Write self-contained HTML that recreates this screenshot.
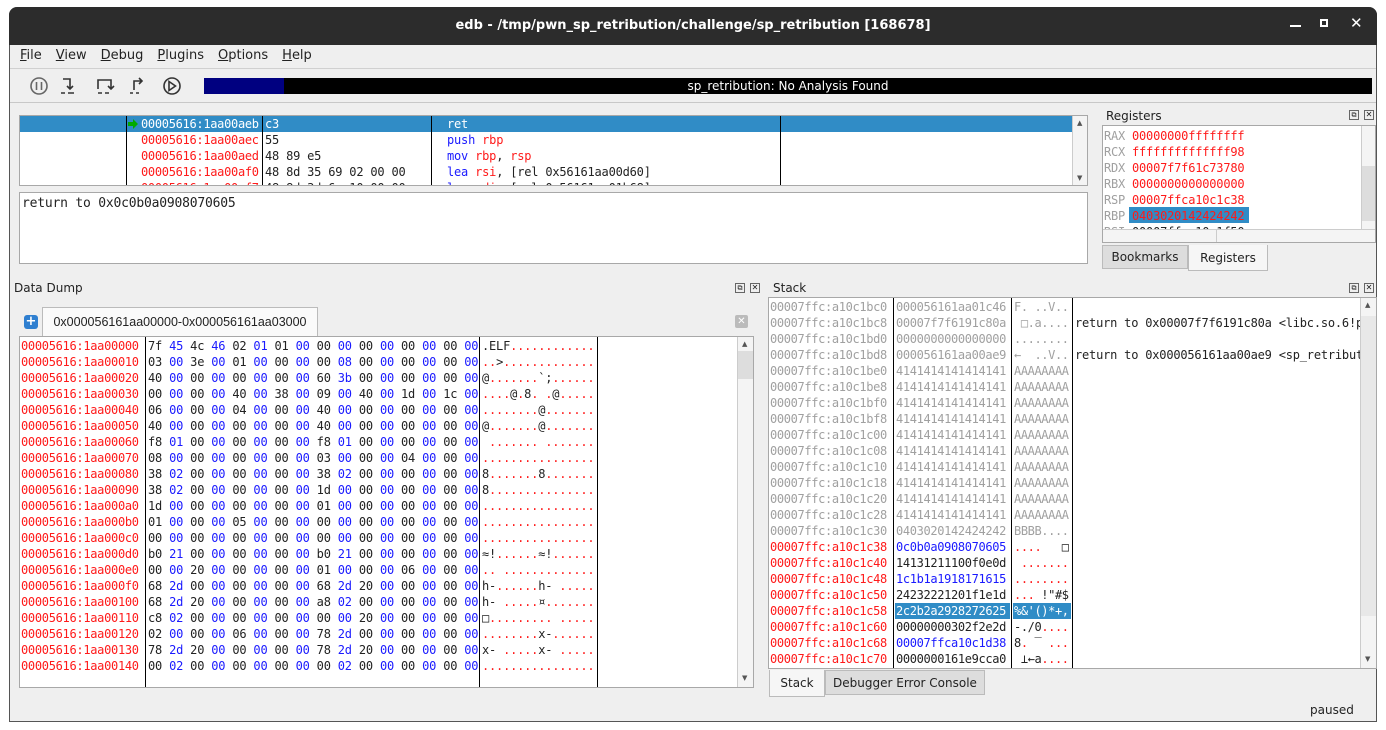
<!DOCTYPE html>
<html><head><meta charset="utf-8"><style>
*{margin:0;padding:0;box-sizing:border-box}
body{width:1386px;height:730px;background:#fff;position:relative;overflow:hidden;font-family:"DejaVu Sans","Liberation Sans",sans-serif;font-size:12px;color:#222}
.a{position:absolute}
.win{left:9px;top:7px;width:1368px;height:715px;background:#efefef;border:1px solid #555;border-top:none;border-radius:8px 8px 0 0;overflow:hidden}
.title{left:9px;top:7px;width:1368px;height:38px;background:#2c2c2c;border-radius:8px 8px 0 0;color:#fff;font-weight:bold;font-size:13px;text-align:center;line-height:38px}
.mono{font-family:"DejaVu Sans Mono","Liberation Mono",monospace;font-size:12px;white-space:pre;line-height:16px;letter-spacing:-0.2px}
.box{background:#fff;border:1px solid #a8a8a8}
.r{color:#ff1a1a}.b{color:#1a1aff}.g{color:#a0a0a0}.k{color:#222}
.vl{position:absolute;width:1px;background:#000}
.sb{position:absolute;background:#f4f4f4;border-left:1px solid #ccc}
.tab{position:absolute;border:1px solid #bbb;text-align:center;font-size:12px;white-space:nowrap}
</style></head><body>
<div class="a win"></div>
<div class="a title">edb - /tmp/pwn_sp_retribution/challenge/sp_retribution [168678]</div>
<div class="a" style="left:1290px;top:25px;width:11px;height:2px;background:#fff"></div>
<div class="a" style="left:1320px;top:19px;width:8px;height:8px;border:2px solid #fff"></div>
<div class="a" style="left:1350px;top:14px;color:#fff;font-size:15px;font-weight:bold">✕</div>

<div class="a" style="left:20px;top:48px;font-size:13px">
<span style="margin-right:14px"><u>F</u>ile</span><span style="margin-right:14px"><u>V</u>iew</span><span style="margin-right:14px"><u>D</u>ebug</span><span style="margin-right:14px"><u>P</u>lugins</span><span style="margin-right:14px"><u>O</u>ptions</span><span><u>H</u>elp</span></div>
<div class="a" style="left:10px;top:68px;width:1366px;height:1px;background:#d0d0d0"></div>
<svg class="a" style="left:14px;top:74px" width="180" height="24" fill="none" stroke="#333" stroke-width="1.6">
<circle cx="25" cy="12" r="8" stroke="#666"/><line x1="22.5" y1="8" x2="22.5" y2="16" stroke="#666"/><line x1="27.5" y1="8" x2="27.5" y2="16" stroke="#666"/>
<path d="M49 5h7v10M53 12l3 3 3-3M47 19h4M54 19h6"/>
<path d="M84 15V6h13v9M94 12l3 3 3-3M84 19h4M91 19h4"/>
<path d="M116 19h3M122 19h3M120 16V7h8M125 4l3 3-3 3"/>
<circle cx="158" cy="12" r="8"/><path d="M155 7.5l6.5 4.5-6.5 4.5z"/>
</svg>
<div class="a" style="left:204px;top:78px;width:1168px;height:16px;background:#000;color:#fff;text-align:center;font-size:12px;line-height:16px">sp_retribution: No Analysis Found</div>
<div class="a" style="left:204px;top:78px;width:80px;height:16px;background:#000080"></div>
<div class="a" style="left:10px;top:102px;width:1366px;height:1px;background:#c8c8c8"></div>

<div class="a box" style="left:19px;top:115px;width:1069px;height:71px;overflow:hidden">
<div class="a" style="left:0;top:0;width:1052px;height:16px;background:#308cc6"></div>
<div class="vl" style="left:106px;top:0;height:71px"></div>
<div class="vl" style="left:242px;top:0;height:71px"></div>
<div class="vl" style="left:411px;top:0;height:71px"></div>
<div class="vl" style="left:760px;top:0;height:71px"></div>
<svg class="a" style="left:107px;top:3px" width="12" height="10"><path d="M1 3h5V0l5 5-5 5V7H1z" fill="#0a0"/></svg>
<div class="a mono" style="left:121px;top:0;letter-spacing:-0.3px"><span style="color:#fff">00005616:1aa00aeb</span>
<span class="r">00005616:1aa00aec</span>
<span class="r">00005616:1aa00aed</span>
<span class="r">00005616:1aa00af0</span>
<span class="r">00005616:1aa00af7</span></div>
<div class="a mono" style="left:245px;top:0"><span style="color:#fff">c3</span>
55
48 89 e5
48 8d 35 69 02 00 00
48 8d 3d 6a 10 00 00</div>
<div class="a mono" style="left:427px;top:0"><span style="color:#fff">ret</span>
<span class="b">push</span> <span class="r">rbp</span>
<span class="b">mov</span> <span class="r">rbp</span>, <span class="r">rsp</span>
<span class="b">lea</span> <span class="r">rsi</span>, [rel 0x56161aa00d60]
<span class="b">lea</span> <span class="r">rdi</span>, [rel 0x56161aa01b68]</div>
<div class="sb" style="left:1052px;top:0;width:16px;height:71px"><div style="position:absolute;top:3px;left:4px;font-size:7px;color:#555">▲</div><div style="position:absolute;top:58px;left:4px;font-size:7px;color:#555">▼</div></div>
</div>
<div class="a box" style="left:19px;top:192px;width:1069px;height:72px"><div class="a mono" style="left:2px;top:3px;font-size:13px">return to 0x0c0b0a0908070605</div></div>

<div class="a" style="left:1106px;top:109px;font-size:12px">Registers</div>
<div class="a" style="left:1349px;top:110px;width:10px;height:10px;border:1px solid #666;font-size:7px;line-height:8px;text-align:center">⧉</div>
<div class="a" style="left:1364px;top:110px;width:10px;height:10px;border:1px solid #666;font-size:8px;line-height:8px;text-align:center">✕</div>
<div class="a box" style="left:1102px;top:125px;width:274px;height:118px;overflow:hidden">
<div class="a" style="left:26px;top:81px;width:120px;height:16px;background:#308cc6"></div>
<div class="a mono g" style="left:1px;top:2px">RAX
RCX
RDX
RBX
RSP
RBP
RSI</div>
<div class="a mono r" style="left:29px;top:2px">00000000ffffffff
ffffffffffffff98
00007f7f61c73780
0000000000000000
00007ffca10c1c38
0403020142424242
<span class="k">00007ffca10c1f50</span></div>
<div class="sb" style="left:258px;top:0;width:16px;height:104px"><div style="position:absolute;top:40px;left:0;width:15px;height:55px;background:#ddd"></div></div>
<div class="a" style="left:0;top:103px;width:274px;height:15px;background:#f4f4f4;border-top:1px solid #ccc"><div style="position:absolute;left:113px;top:0;width:1px;height:14px;background:#ccc"></div></div>
</div>
<div class="tab" style="left:1102px;top:245px;width:86px;height:24px;background:#ddd;line-height:22px">Bookmarks</div>
<div class="tab" style="left:1188px;top:245px;width:80px;height:26px;background:#f6f6f6;border-top:none;line-height:26px">Registers</div>

<div class="a" style="left:14px;top:281px">Data Dump</div>
<div class="a" style="left:735px;top:283px;width:10px;height:10px;border:1px solid #666;font-size:7px;line-height:8px;text-align:center">⧉</div>
<div class="a" style="left:750px;top:283px;width:10px;height:10px;border:1px solid #666;font-size:8px;line-height:8px;text-align:center">✕</div>
<div class="a" style="left:24px;top:315px;width:14px;height:14px;background:#2f7fd0;border-radius:3px;color:#fff;font-weight:bold;font-size:13px;line-height:13px;text-align:center">+</div>
<div class="tab" style="left:42px;top:307px;width:276px;height:30px;background:#fafafa;border-bottom:none;line-height:28px;font-family:'Liberation Sans',sans-serif;font-size:12.5px;overflow:hidden">0x000056161aa00000-0x000056161aa03000</div>
<div class="a" style="left:735px;top:315px;width:13px;height:13px;background:#bbb;border-radius:2px;color:#fff;font-size:10px;line-height:13px;text-align:center">✕</div>
<div class="a box" style="left:19px;top:336px;width:735px;height:352px;overflow:hidden">
<div class="vl" style="left:125px;top:0;height:352px"></div>
<div class="vl" style="left:459px;top:0;height:352px"></div>
<div class="vl" style="left:577px;top:0;height:352px"></div>
<div class="a mono r" style="left:1px;top:1px;letter-spacing:-0.3px">00005616:1aa00000
00005616:1aa00010
00005616:1aa00020
00005616:1aa00030
00005616:1aa00040
00005616:1aa00050
00005616:1aa00060
00005616:1aa00070
00005616:1aa00080
00005616:1aa00090
00005616:1aa000a0
00005616:1aa000b0
00005616:1aa000c0
00005616:1aa000d0
00005616:1aa000e0
00005616:1aa000f0
00005616:1aa00100
00005616:1aa00110
00005616:1aa00120
00005616:1aa00130
00005616:1aa00140</div>
<div class="a mono" style="left:128px;top:1px;letter-spacing:-0.2px">7f <span class="b">45</span> 4c <span class="b">46</span> 02 <span class="b">01</span> 01 <span class="b">00</span> 00 <span class="b">00</span> 00 <span class="b">00</span> 00 <span class="b">00</span> 00 <span class="b">00</span>
03 <span class="b">00</span> 3e <span class="b">00</span> 01 <span class="b">00</span> 00 <span class="b">00</span> 00 <span class="b">08</span> 00 <span class="b">00</span> 00 <span class="b">00</span> 00 <span class="b">00</span>
40 <span class="b">00</span> 00 <span class="b">00</span> 00 <span class="b">00</span> 00 <span class="b">00</span> 60 <span class="b">3b</span> 00 <span class="b">00</span> 00 <span class="b">00</span> 00 <span class="b">00</span>
00 <span class="b">00</span> 00 <span class="b">00</span> 40 <span class="b">00</span> 38 <span class="b">00</span> 09 <span class="b">00</span> 40 <span class="b">00</span> 1d <span class="b">00</span> 1c <span class="b">00</span>
06 <span class="b">00</span> 00 <span class="b">00</span> 04 <span class="b">00</span> 00 <span class="b">00</span> 40 <span class="b">00</span> 00 <span class="b">00</span> 00 <span class="b">00</span> 00 <span class="b">00</span>
40 <span class="b">00</span> 00 <span class="b">00</span> 00 <span class="b">00</span> 00 <span class="b">00</span> 40 <span class="b">00</span> 00 <span class="b">00</span> 00 <span class="b">00</span> 00 <span class="b">00</span>
f8 <span class="b">01</span> 00 <span class="b">00</span> 00 <span class="b">00</span> 00 <span class="b">00</span> f8 <span class="b">01</span> 00 <span class="b">00</span> 00 <span class="b">00</span> 00 <span class="b">00</span>
08 <span class="b">00</span> 00 <span class="b">00</span> 00 <span class="b">00</span> 00 <span class="b">00</span> 03 <span class="b">00</span> 00 <span class="b">00</span> 04 <span class="b">00</span> 00 <span class="b">00</span>
38 <span class="b">02</span> 00 <span class="b">00</span> 00 <span class="b">00</span> 00 <span class="b">00</span> 38 <span class="b">02</span> 00 <span class="b">00</span> 00 <span class="b">00</span> 00 <span class="b">00</span>
38 <span class="b">02</span> 00 <span class="b">00</span> 00 <span class="b">00</span> 00 <span class="b">00</span> 1d <span class="b">00</span> 00 <span class="b">00</span> 00 <span class="b">00</span> 00 <span class="b">00</span>
1d <span class="b">00</span> 00 <span class="b">00</span> 00 <span class="b">00</span> 00 <span class="b">00</span> 01 <span class="b">00</span> 00 <span class="b">00</span> 00 <span class="b">00</span> 00 <span class="b">00</span>
01 <span class="b">00</span> 00 <span class="b">00</span> 05 <span class="b">00</span> 00 <span class="b">00</span> 00 <span class="b">00</span> 00 <span class="b">00</span> 00 <span class="b">00</span> 00 <span class="b">00</span>
00 <span class="b">00</span> 00 <span class="b">00</span> 00 <span class="b">00</span> 00 <span class="b">00</span> 00 <span class="b">00</span> 00 <span class="b">00</span> 00 <span class="b">00</span> 00 <span class="b">00</span>
b0 <span class="b">21</span> 00 <span class="b">00</span> 00 <span class="b">00</span> 00 <span class="b">00</span> b0 <span class="b">21</span> 00 <span class="b">00</span> 00 <span class="b">00</span> 00 <span class="b">00</span>
00 <span class="b">00</span> 20 <span class="b">00</span> 00 <span class="b">00</span> 00 <span class="b">00</span> 01 <span class="b">00</span> 00 <span class="b">00</span> 06 <span class="b">00</span> 00 <span class="b">00</span>
68 <span class="b">2d</span> 00 <span class="b">00</span> 00 <span class="b">00</span> 00 <span class="b">00</span> 68 <span class="b">2d</span> 20 <span class="b">00</span> 00 <span class="b">00</span> 00 <span class="b">00</span>
68 <span class="b">2d</span> 20 <span class="b">00</span> 00 <span class="b">00</span> 00 <span class="b">00</span> a8 <span class="b">02</span> 00 <span class="b">00</span> 00 <span class="b">00</span> 00 <span class="b">00</span>
c8 <span class="b">02</span> 00 <span class="b">00</span> 00 <span class="b">00</span> 00 <span class="b">00</span> 00 <span class="b">00</span> 20 <span class="b">00</span> 00 <span class="b">00</span> 00 <span class="b">00</span>
02 <span class="b">00</span> 00 <span class="b">00</span> 06 <span class="b">00</span> 00 <span class="b">00</span> 78 <span class="b">2d</span> 00 <span class="b">00</span> 00 <span class="b">00</span> 00 <span class="b">00</span>
78 <span class="b">2d</span> 20 <span class="b">00</span> 00 <span class="b">00</span> 00 <span class="b">00</span> 78 <span class="b">2d</span> 20 <span class="b">00</span> 00 <span class="b">00</span> 00 <span class="b">00</span>
00 <span class="b">02</span> 00 <span class="b">00</span> 00 <span class="b">00</span> 00 <span class="b">00</span> 00 <span class="b">02</span> 00 <span class="b">00</span> 00 <span class="b">00</span> 00 <span class="b">00</span></div>
<div class="a mono r" style="left:462px;top:1px"><span class="k">.ELF</span>............
..<span class="k">&gt;</span>.............
<span class="k">@</span>.......<span class="k">`;</span>......
....<span class="k">@</span>.<span class="k">8</span>. .<span class="k">@</span>.....
........<span class="k">@</span>.......
<span class="k">@</span>.......<span class="k">@</span>.......
 ....... .......
................
<span class="k">8</span>.......<span class="k">8</span>.......
<span class="k">8</span>...............
................
................
................
<span class="k">≈!</span>......<span class="k">≈!</span>......
.. .............
<span class="k">h-</span>......<span class="k">h-</span> .....
<span class="k">h-</span> .....<span class="k">¤</span>.......
<span class="k">□</span>......... .....
........<span class="k">x-</span>......
<span class="k">x-</span> .....<span class="k">x-</span> .....
................</div>
<div class="sb" style="left:717px;top:0;width:16px;height:350px"><div style="position:absolute;top:3px;left:4px;font-size:7px;color:#555">▲</div><div style="position:absolute;top:14px;left:0;width:15px;height:28px;background:#ddd"></div><div style="position:absolute;top:337px;left:4px;font-size:7px;color:#555">▼</div></div>
</div>

<div class="a" style="left:773px;top:281px">Stack</div>
<div class="a" style="left:1349px;top:283px;width:10px;height:10px;border:1px solid #666;font-size:7px;line-height:8px;text-align:center">⧉</div>
<div class="a" style="left:1364px;top:283px;width:10px;height:10px;border:1px solid #666;font-size:8px;line-height:8px;text-align:center">✕</div>
<div class="a box" style="left:768px;top:297px;width:609px;height:372px;overflow:hidden">
<div class="vl" style="left:124px;top:0;height:372px"></div>
<div class="vl" style="left:242px;top:0;height:372px"></div>
<div class="vl" style="left:303px;top:0;height:372px"></div>
<div class="a" style="left:126px;top:305px;width:115px;height:16px;background:#308cc6"></div>
<div class="a" style="left:244px;top:305px;width:58px;height:16px;background:#308cc6"></div>
<div class="a mono" style="left:1px;top:1px;letter-spacing:-0.35px"><span class="g">00007ffc:a10c1bc0
00007ffc:a10c1bc8
00007ffc:a10c1bd0
00007ffc:a10c1bd8
00007ffc:a10c1be0
00007ffc:a10c1be8
00007ffc:a10c1bf0
00007ffc:a10c1bf8
00007ffc:a10c1c00
00007ffc:a10c1c08
00007ffc:a10c1c10
00007ffc:a10c1c18
00007ffc:a10c1c20
00007ffc:a10c1c28
00007ffc:a10c1c30</span>
<span class="r">00007ffc:a10c1c38
00007ffc:a10c1c40
00007ffc:a10c1c48
00007ffc:a10c1c50
00007ffc:a10c1c58
00007ffc:a10c1c60
00007ffc:a10c1c68
00007ffc:a10c1c70</span></div>
<div class="a mono" style="left:127px;top:1px;letter-spacing:-0.35px"><span class="g">000056161aa01c46
00007f7f6191c80a
0000000000000000
000056161aa00ae9
4141414141414141
4141414141414141
4141414141414141
4141414141414141
4141414141414141
4141414141414141
4141414141414141
4141414141414141
4141414141414141
4141414141414141
0403020142424242</span>
<span class="b">0c0b0a0908070605</span>
14131211100f0e0d
<span class="b">1c1b1a1918171615</span>
24232221201f1e1d
<span style="color:#fff">2c2b2a2928272625</span>
00000000302f2e2d
<span class="b">00007ffca10c1d38</span>
0000000161e9cca0</div>
<div class="a mono" style="left:245px;top:1px;letter-spacing:-0.4px"><span class="g">F. ..V..
 □.a....
........
←  ..V..
AAAAAAAA
AAAAAAAA
AAAAAAAA
AAAAAAAA
AAAAAAAA
AAAAAAAA
AAAAAAAA
AAAAAAAA
AAAAAAAA
AAAAAAAA
BBBB....</span>
<span class="r">....</span>   □
<span class="r"> .......</span>
<span class="r">........</span>
<span class="r">...</span> !"#$
<span style="color:#fff">%&amp;'()*+,</span>
-./0<span class="r">....</span>
8<span class="r">.</span> ‾ <span class="r">...</span>
 ⊥←a<span class="r">....</span></div>
<div class="a mono" style="left:306px;top:17px">return to 0x00007f7f6191c80a &lt;libc.so.6!p

return to 0x000056161aa00ae9 &lt;sp_retribut</div>
<div class="sb" style="left:591px;top:0;width:16px;height:370px"><div style="position:absolute;top:3px;left:4px;font-size:7px;color:#555">▲</div><div style="position:absolute;top:18px;left:0;width:15px;height:300px;background:#e8e8e8"></div><div style="position:absolute;top:357px;left:4px;font-size:7px;color:#555">▼</div></div>
</div>
<div class="tab" style="left:769px;top:670px;width:56px;height:27px;background:#f6f6f6;border-top:none;line-height:26px">Stack</div>
<div class="tab" style="left:825px;top:670px;width:160px;height:25px;background:#ddd;line-height:24px">Debugger Error Console</div>
<div class="a" style="left:1310px;top:703px">paused</div>
</body></html>
